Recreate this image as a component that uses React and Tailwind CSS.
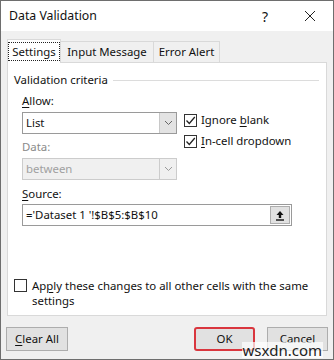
import React from 'react';

const font = { fontFamily: '"Noto Sans", "Open Sans", sans-serif' };

const Chevron = ({ color = '#555' }) => (
  <svg width="9" height="6" viewBox="0 0 9 6">
    <path d="M1 1l3.5 3.5L8 1" fill="none" stroke={color} strokeWidth="1" />
  </svg>
);

const Check = () => (
  <svg width="11" height="11" viewBox="0 0 11 11">
    <path d="M1.5 5.5l2.8 3L9.8 2" fill="none" stroke="#222" strokeWidth="1.3" />
  </svg>
);

const Checkbox = ({ checked, children }) => (
  <div className="flex items-center gap-[4px] h-[14px]">
    <div className="w-[13px] h-[13px] border border-[#333] bg-white flex items-center justify-center shrink-0">
      {checked && <Check />}
    </div>
    <span className="leading-[14px]">{children}</span>
  </div>
);

const Combo = ({ value, disabled }) => (
  <div
    className={
      'w-[155px] h-[22px] border flex items-stretch ' +
      (disabled ? 'border-[#cccccc] bg-[#f0f0f0] text-[#a0a0a0]' : 'border-[#9a9a9a] bg-white text-[#111]')
    }
  >
    <div className="flex-1 flex items-center pl-[3px]">{value}</div>
    <div
      className={
        'w-[17px] flex items-center justify-center border-l ' +
        (disabled ? 'border-[#cccccc] bg-[#f0f0f0]' : 'border-[#c8c8c8] bg-[#e3e3e3]')
      }
    >
      <Chevron color={disabled ? '#9a9a9a' : '#666'} />
    </div>
  </div>
);

export default function App() {
  return (
    <div
      className="relative w-[334px] h-[360px] bg-[#f0f0f0] border border-[#6e6e6e] text-[11.4px] text-[#111] flex flex-col overflow-hidden"
      style={font}
    >
      {/* title bar */}
      <div className="h-[30px] bg-white flex items-center pl-[8px] shrink-0">
        <span className="text-[12.3px] flex-1">Data Validation</span>
        <span className="text-[14px] w-[20px] text-center mr-[29px]">?</span>
        <svg width="12" height="12" viewBox="0 0 12 12" className="mr-[17px]">
          <path d="M1 1l10 10M11 1L1 11" stroke="#222" strokeWidth="1" />
        </svg>
      </div>

      {/* tabs */}
      <div className="flex items-end h-[31px] pl-[6px] shrink-0">
        <div className="h-[24px] w-[54px] bg-white border border-[#d9d9d9] border-b-0 flex items-center justify-center relative z-10 -mb-px">
          <span className="outline-1 outline-dotted outline-[#222] px-[3px] leading-[17px]">Settings</span>
        </div>
        <div className="h-[21px] w-[93px] bg-[#f0f0f0] border border-[#d9d9d9] border-l-0 border-b-0 flex items-center justify-center">
          Input Message
        </div>
        <div className="h-[21px] w-[66px] bg-[#f0f0f0] border border-[#d9d9d9] border-l-0 border-b-0 flex items-center justify-center">
          Error Alert
        </div>
      </div>

      {/* panel */}
      <div className="mx-[6px] h-[254px] bg-white border border-[#d9d9d9] flex flex-col pl-[6px] pr-[7px] shrink-0">
        <div className="flex items-center mt-[10px] h-[14px]">
          <span>Validation criteria</span>
          <div className="flex-1 h-px bg-[#dcdcdc] ml-[5px]" />
        </div>

        <div className="pl-[8px] grid grid-cols-[155px_auto] gap-x-[7px] items-start">
          <div className="mt-[7px] h-[14px] leading-[14px] col-span-2">
            <span className="underline underline-offset-2">A</span>llow:
          </div>
          <div className="mt-[4px]">
            <Combo value="List" />
          </div>
          <div className="mt-[5px] row-span-3 flex flex-col gap-[7px]">
            <Checkbox checked>
              Ignore <span className="underline underline-offset-2">b</span>lank
            </Checkbox>
            <Checkbox checked>
              <span className="underline underline-offset-2">I</span>n-cell dropdown
            </Checkbox>
          </div>
          <div className="mt-[6px] h-[14px] leading-[14px] text-[#8a8a8a]">Data:</div>
          <div className="mt-[4px]">
            <Combo value="between" disabled />
          </div>
          <div className="mt-[7px] h-[14px] leading-[14px] col-span-2">
            <span className="underline underline-offset-2">S</span>ource:
          </div>
          <div className="col-span-2 mt-[3px] w-[270px] h-[22px] border border-[#9a9a9a] bg-white flex items-center pl-[3px] pr-[1px]">
            <span className="flex-1">='Dataset 1 '!$B$5:$B$10</span>
            <div className="w-[20px] h-[18px] bg-[#e1e1e1] border border-[#adadad] flex items-center justify-center">
              <svg width="10" height="11" viewBox="0 0 10 11">
                <path d="M5 1L1.5 5h2.3v3h2.4V5h2.3z" fill="#111" />
                <rect x="1" y="9.3" width="8" height="1.4" fill="#111" />
              </svg>
            </div>
          </div>
        </div>

        <div className="mt-[52px] flex items-start gap-[5px]">
          <div className="mt-[1px] w-[13px] h-[13px] border border-[#333] bg-white shrink-0" />
          <div className="leading-[15px] w-[286px]">
            Ap<span className="underline underline-offset-2">p</span>ly these changes to all other cells with the same settings
          </div>
        </div>
      </div>

      {/* buttons */}
      <div className="flex items-center mt-[11px] px-[5px]">
        <button className="w-[62px] h-[24px] bg-[#e1e1e1] border border-[#adadad] flex items-center justify-center">
          <span className="underline underline-offset-2">C</span>lear All
        </button>
        <div className="flex-1" />
        <button className="w-[61px] h-[24px] bg-[#e1e1e1] border-2 border-[#d9363e] rounded-[3px] flex items-center justify-center">
          OK
        </button>
        <button className="ml-[12px] w-[61px] h-[24px] bg-[#e1e1e1] border border-[#adadad] flex items-center justify-center">
          Cancel
        </button>
      </div>

      <div className="absolute right-[10px] bottom-[1px] text-[15px] leading-[16px] text-[#222] bg-white/70 px-[1px]">
        wsxdn.com
      </div>
    </div>
  );
}
